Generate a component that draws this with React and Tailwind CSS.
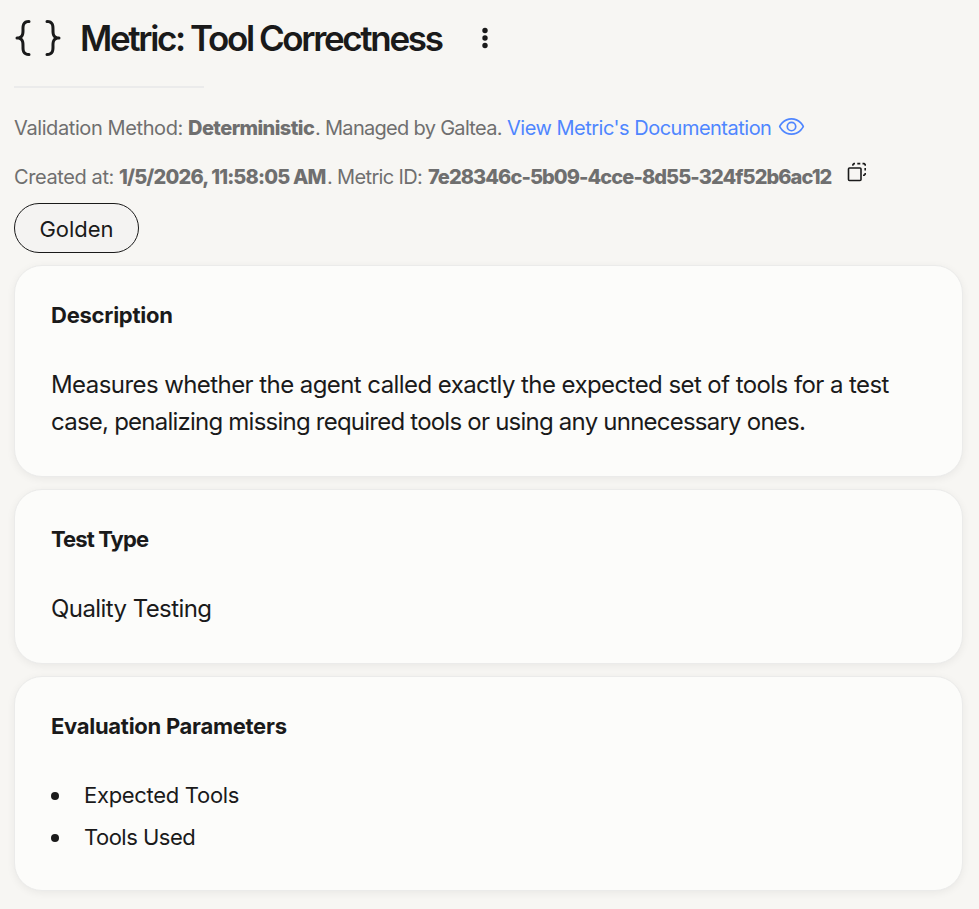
import React from 'react';
import { PiBracketsCurly, PiEye } from 'react-icons/pi';

function DotsIcon() {
  return (
    <svg width="8" height="22" viewBox="0 0 8 22" fill="currentColor">
      <circle cx="4" cy="3.5" r="2.7" />
      <circle cx="4" cy="11" r="2.7" />
      <circle cx="4" cy="18.5" r="2.7" />
    </svg>
  );
}

function CopyIcon() {
  return (
    <svg width="20" height="20" viewBox="0 0 20 20" fill="none" stroke="currentColor" strokeWidth="1.6" strokeLinejoin="round">
      <rect x="1.5" y="6" width="12.5" height="12.5" rx="1" />
      <path d="M5.9 3.8V2.6L6.9 1.6H8M10.3 1.6h3M15.5 1.6h1.7l1 1V3.8M18.2 6v2.6M18.2 11v1.2l-1 1H16" />
    </svg>
  );
}

function Card({ title, className, titleClass, children }) {
  return (
    <section className={`rounded-[28px] border border-[#ebebea] bg-[#fcfcfa] px-9 pt-[30px] shadow-[0_2px_8px_rgba(0,0,0,0.06)] ${className}`}>
      <h2 className={`text-[22px] leading-[38px] font-bold ${titleClass}`}>{title}</h2>
      {children}
    </section>
  );
}

export default function App() {
  return (
    <main className="h-[909px] overflow-hidden bg-[#f7f6f3] pl-3.5 pr-4 pt-3.5 font-['Inter',sans-serif] text-[#1a1a1a]">
      <header className="flex h-12 items-center whitespace-nowrap">
        <PiBracketsCurly size={48} />
        <h1 className="ml-[18px] w-[363px] text-[35px] leading-[48px] font-semibold tracking-[-2.35px] [word-spacing:-0.3px]">Metric: Tool Correctness</h1>
        <button className="ml-[38px]"><DotsIcon /></button>
      </header>
      <div className="mt-6 h-[2px] w-[190px] bg-[#ebebeb]" />
      <p className="mt-6 flex h-8 items-center whitespace-pre text-[20px] text-[#6f6f6f]">
        <span className="w-[174px] tracking-[-0.4px]">Validation Method: </span>
        <b className="w-[127px] font-extrabold tracking-[-0.57px]">Deterministic</b>
        <span className="w-[192px] tracking-[-0.7px]">. Managed by Galtea. </span>
        <a className="flex items-center text-[#4f86ff]">
          <span className="w-[265px] tracking-[-0.5px]">View Metric's Documentation</span>
          <PiEye size={27} className="mb-[3px] ml-[6px]" />
        </a>
      </p>
      <p className="mt-[17px] flex h-8 items-center whitespace-pre text-[20px] text-[#6f6f6f]">
        <span className="w-[105px] tracking-[-0.4px]">Created at: </span>
        <b className="w-[208px] font-extrabold tracking-[-0.83px]">1/5/2026, 11:58:05 AM</b>
        <span className="w-[101px] tracking-[-0.65px]">. Metric ID: </span>
        <b className="w-[406px] font-extrabold tracking-[-0.93px]">7e28346c-5b09-4cce-8d55-324f52b6ac12</b>
        <button className="mb-[11px] ml-[13px] text-[#1a1a1a]"><CopyIcon /></button>
      </p>
      <div className="mt-[10px] flex h-[50px] w-[125px] items-center justify-center rounded-full border border-[#1a1a1a] bg-[#f4f3f2] pt-[2px] text-[22px]">
        Golden
      </div>

      <div className="mt-3 flex flex-col gap-3 whitespace-nowrap">
        <Card title="Description" className="h-[212px]" titleClass="tracking-[-0.25px]">
          <p className="mt-8 text-[24px] leading-[37px]">
            <span className="block tracking-[-0.57px]">Measures whether the agent called exactly the expected set of tools for a test</span>
            <span className="block tracking-[-0.77px]">case, penalizing missing required tools or using any unnecessary ones.</span>
          </p>
        </Card>
        <Card title="Test Type" className="h-[175px]" titleClass="tracking-[-0.9px]">
          <p className="mt-8 text-[24px] leading-[37px] tracking-[-0.57px]">Quality Testing</p>
        </Card>
        <Card title="Evaluation Parameters" className="h-[215px]" titleClass="tracking-[-0.28px]">
          <ul className="mt-[29px] text-[22px] leading-[42px]">
            <li className="flex items-center">
              <span className="mt-0.5 mr-[25px] size-2 rounded-full bg-[#1a1a1a]" />
              <span className="tracking-[-0.3px]">Expected Tools</span>
            </li>
            <li className="flex items-center">
              <span className="mt-0.5 mr-[25px] size-2 rounded-full bg-[#1a1a1a]" />
              <span className="tracking-[-0.5px]">Tools Used</span>
            </li>
          </ul>
        </Card>
      </div>
    </main>
  );
}
